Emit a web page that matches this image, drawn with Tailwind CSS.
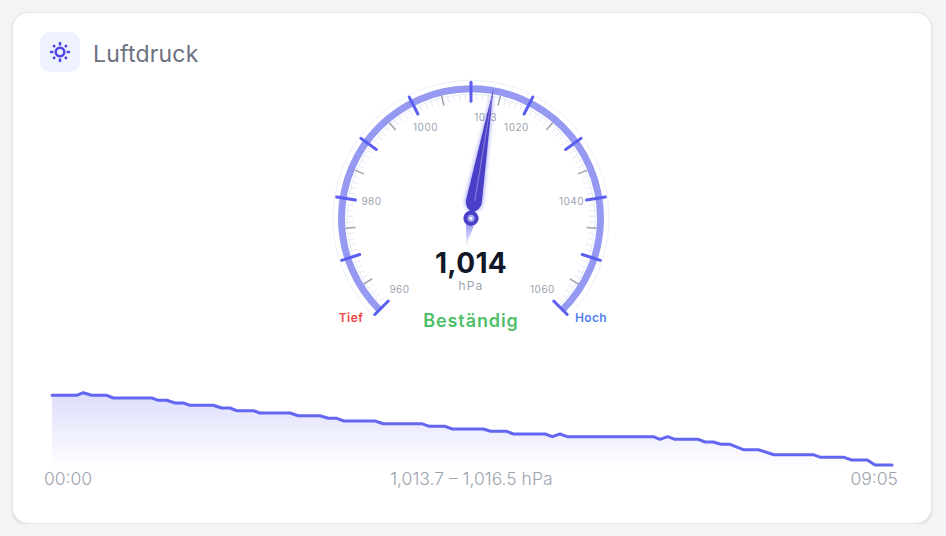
<!DOCTYPE html>
<html lang="de">
<head>
  <meta charset="UTF-8" />
  <title>Luftdruck</title>
  <script src="https://cdn.jsdelivr.net/npm/@tailwindcss/browser@4"></script>
</head>
<body class="bg-[#f3f4f6] font-[Inter,sans-serif] overflow-hidden">
  <div class="pl-3 pr-[14px] pt-3">
    <div class="h-[512px] bg-white border border-[#e5e7eb] rounded-2xl shadow-sm px-[27px] pt-[19px]">
      <!-- Kopf -->
      <div class="flex items-center gap-[13px] h-10">
        <div class="w-10 h-10 rounded-[10px] bg-[#eef2ff] flex items-center justify-center">
          <svg class="w-5 h-5" viewBox="0 0 20 20" fill="none" stroke="#4f46e5" stroke-width="2.5" stroke-linecap="butt">
            <circle cx="10" cy="10" r="4.3" />
            <path d="M10 0V3.4M10 16.6V20M0 10H3.4M16.6 10H20M3.2 3.2L5 5M15 15L16.8 16.8M3.2 16.8L5 15M15 5L16.8 3.2" />
          </svg>
        </div>
        <h2 class="text-[23px] font-normal tracking-[0.2px] text-[#6b7280] pt-[5px]">Luftdruck</h2>
      </div>

      <!-- Tacho -->
      <svg class="block w-[318px] h-[268px] mx-auto" viewBox="313 72 318 268">
        <defs>
          <linearGradient id="tailGrad" x1="0" y1="0" x2="0" y2="1">
            <stop offset="0" stop-color="#6366f1" stop-opacity="0.6" />
            <stop offset="1" stop-color="#6366f1" stop-opacity="0.05" />
          </linearGradient>
          <filter id="needleGlow" x="-100%" y="-20%" width="300%" height="140%">
            <feGaussianBlur stdDeviation="2" />
          </filter>
        </defs>
        <g id="dial"></g>
        <g class="text-[10px] tracking-[0.5px]" fill="#9ca3af" text-anchor="middle">
          <text x="399.5" y="293">960</text>
          <text x="371.5" y="205">980</text>
          <text x="425.5" y="131">1000</text>
          <text x="485.5" y="121">1013</text>
          <text x="516.5" y="131">1020</text>
          <text x="571.5" y="205">1040</text>
          <text x="542.5" y="293">1060</text>
        </g>
        <g transform="rotate(9.8 471 218.3) translate(471 218.3)">
          <path d="M0 -132L8.5 -17Q8.5 -10 0 -6Q-8.5 -10 -8.5 -17Z" fill="#6366f1" opacity="0.7" filter="url(#needleGlow)" />
          <path d="M-4 7L4 7L0 28Z" fill="url(#tailGrad)" />
          <path d="M0 -132L8 -17Q8 -10 0 -6Q-8 -10 -8 -17Z" fill="#4a3fc6" />
          <path d="M0 -125L0.8 -18" stroke="#7f7bd8" stroke-width="1.2" fill="none" />
          <circle r="7.6" fill="#4a3fc6" />
          <circle r="3.6" fill="#a5a6f0" />
          <circle r="1.5" fill="#ffffff" />
        </g>
        <text x="471" y="273" text-anchor="middle" class="text-[28px] font-bold tracking-[0.3px]" fill="#111827">1,014</text>
        <text x="471" y="290" text-anchor="middle" class="text-[12px] tracking-[1.2px]" fill="#9ca3af">hPa</text>
        <text x="471" y="327" text-anchor="middle" class="text-[18px] font-semibold tracking-[0.9px]" fill="#4fbf67">Beständig</text>
        <text x="351" y="322" text-anchor="middle" class="text-[12px] font-semibold tracking-[0.4px]" fill="#ef4444">Tief</text>
        <text x="591" y="322" text-anchor="middle" class="text-[12px] font-semibold tracking-[0.4px]" fill="#4f7ff0">Hoch</text>
      </svg>

      <!-- Verlauf -->
      <svg class="block w-[864px] h-[130px]" viewBox="40 340 864 130">
        <defs>
          <linearGradient id="areaGrad" x1="0" y1="0" x2="0" y2="1">
            <stop offset="0" stop-color="#6366f1" stop-opacity="0.22" />
            <stop offset="1" stop-color="#6366f1" stop-opacity="0" />
          </linearGradient>
        </defs>
        <path id="area" fill="url(#areaGrad)" />
        <path id="line" fill="none" stroke="#6366f1" stroke-width="3" stroke-linejoin="round" stroke-linecap="round" />
      </svg>
      <div class="flex justify-between items-center pl-1 pr-[6px] -mt-[1px] text-[17.5px] font-light text-[#9ca3af] leading-[20px]">
        <span>00:00</span>
        <span>1,013.7 – 1,016.5 hPa</span>
        <span>09:05</span>
      </div>
    </div>
  </div>

  <script>
    // Skala
    const cx = 471, cy = 218.3;
    const dial = document.getElementById('dial');
    function pt(deg, r) {
      const a = deg * Math.PI / 180;
      return [cx + r * Math.sin(a), cy - r * Math.cos(a)];
    }
    function tick(deg, r1, r2, color, width, cap) {
      const p = pt(deg, r1), q = pt(deg, r2);
      return `<line x1="${p[0]}" y1="${p[1]}" x2="${q[0]}" y2="${q[1]}" stroke="${color}" stroke-width="${width}" stroke-linecap="${cap}"/>`;
    }
    function arc(r, color, width) {
      const s = pt(-135, r), e = pt(135, r);
      return `<path d="M${s[0]} ${s[1]}A${r} ${r} 0 1 1 ${e[0]} ${e[1]}" fill="none" stroke="${color}" stroke-width="${width}"/>`;
    }
    let html = arc(138, '#eef0f8', 1) + arc(124, '#e8eaf8', 1);
    for (let v = 0; v <= 100; v++) {
      if (v % 5 !== 0) html += tick(-135 + v * 2.7, 124, 118, '#e6e8f6', 1, 'butt');
    }
    html += arc(129.5, '#9599f1', 7);
    for (let v = 5; v <= 100; v += 10) {
      html += tick(-135 + v * 2.7, 126, 116, '#9ca3af', 1.5, 'butt');
    }
    for (let v = 0; v <= 100; v += 10) {
      html += tick(-135 + v * 2.7, 136, 117, '#5b5ef0', 3, 'round');
    }
    dial.innerHTML = html;

    // Verlauf
    const points = [[52,395.3],[76.7,395.3],[83.3,392.7],[91.7,395.3],[106.7,395.3],[113.3,398],[151.7,398],[158.3,400.3],[166.7,400.3],[175,403],[183.3,403],[190,405.3],[213.3,405.3],[221.7,408],[230,408],[236.7,410.7],[253.3,410.7],[260,413],[290,413],[298.3,415.7],[320,415.7],[328.3,418.3],[336.7,418.3],[344,421],[375,421],[383.3,423.7],[421.7,423.7],[429.3,426.3],[445,426.3],[452.3,429],[483.3,429],[490.7,431.3],[506.7,431.3],[513.3,434],[545,434],[552.3,436.7],[560,434],[567.3,436.7],[653.3,436.7],[660,439.3],[667.7,436.7],[675,439.3],[698.3,439.3],[705,442],[713.3,442],[721,444.3],[730,444.3],[743.3,449.7],[758.3,449.7],[774,454.7],[813.3,454.7],[820.7,457.3],[844,457.3],[851.7,460],[867.3,460],[875,465],[892,465]];
    const d = 'M' + points.map(p => p.join(' ')).join('L');
    document.getElementById('line').setAttribute('d', d);
    document.getElementById('area').setAttribute('d', d + 'L892 468L52 468Z');
  </script>
</body>
</html>
